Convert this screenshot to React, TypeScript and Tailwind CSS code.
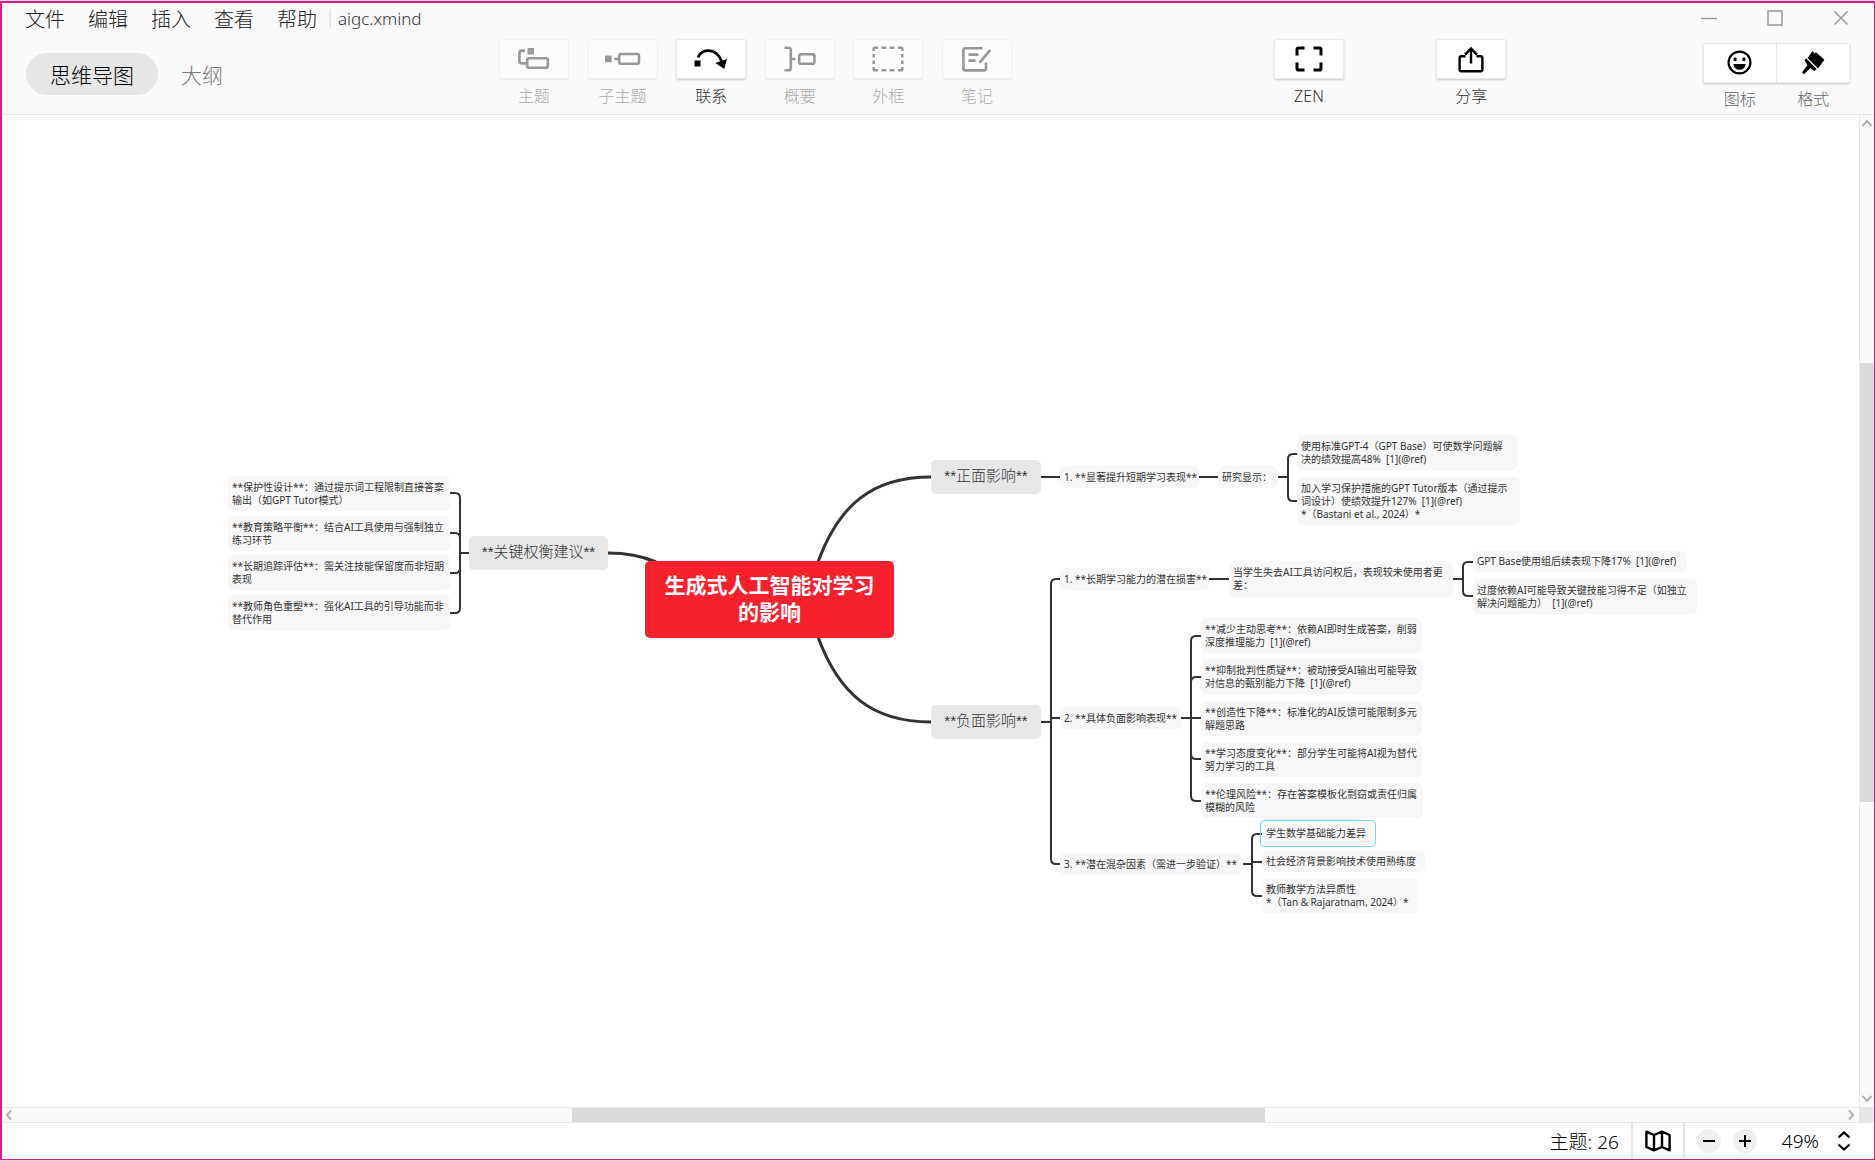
import type { ReactNode } from "react";

const menus = ["文件", "编辑", "插入", "查看", "帮助"];

const TopicIcon = () => (
  <svg width="32" height="22" viewBox="0 0 32 22" fill="none" stroke="currentColor" strokeWidth="2.6">
    <rect x="9.5" y="0" width="6.5" height="6.5" fill="currentColor" stroke="none" />
    <rect x="9.2" y="10.2" width="20.6" height="9.6" rx="1.8" />
    <path d="M7 2.6H4Q1.4 2.6 1.4 5.2V12.8Q1.4 15.4 4 15.4H9" />
  </svg>
);

const SubtopicIcon = () => (
  <svg width="36" height="14" viewBox="0 0 36 14" fill="none" stroke="currentColor" strokeWidth="2.6">
    <rect x="0" y="3.6" width="6.6" height="6.6" fill="currentColor" stroke="none" />
    <path d="M9.5 6.9H14" />
    <rect x="14.2" y="2" width="19.8" height="9.8" rx="1.8" />
  </svg>
);

const RelationIcon = () => (
  <svg width="34" height="22" viewBox="0 0 34 22" fill="none" stroke="currentColor" strokeWidth="2.6">
    <rect x="0.5" y="12.5" width="6" height="6" fill="currentColor" stroke="none" />
    <path d="M4 9.6C6 4.6 10 2.4 14.5 2.6C21.5 2.8 25.6 7.6 27.6 13.5" />
    <path d="M21.4 15L33 11L30.2 21Z" fill="currentColor" stroke="none" />
  </svg>
);

const SummaryIcon = () => (
  <svg width="32" height="26" viewBox="0 0 32 26" fill="none" stroke="currentColor" strokeWidth="2.6">
    <path d="M0.5 1.7H4.2Q6.8 1.7 6.8 4.3V21.7Q6.8 24.3 4.2 24.3H0.5M6.8 13H11.5" />
    <rect x="15.2" y="8.2" width="15.2" height="9.6" rx="1.8" />
  </svg>
);

const BoundaryIcon = () => (
  <svg width="32" height="26" viewBox="0 0 32 26" fill="none" stroke="currentColor" strokeWidth="2.6">
    <path d="M1.7 5V3Q1.7 1.7 3 1.7H6M26 1.7H29Q30.3 1.7 30.3 3V5M30.3 21V23Q30.3 24.3 29 24.3H26M6 24.3H3Q1.7 24.3 1.7 23V21" />
    <path d="M9.5 1.7H14.2M17.6 1.7H22.3M9.5 24.3H14.2M17.6 24.3H22.3M1.7 8V11.5M1.7 14.5V18M30.3 8V11.5M30.3 14.5V18" />
  </svg>
);

const NoteIcon = () => (
  <svg width="30" height="27" viewBox="0 0 30 27" fill="none" stroke="currentColor" strokeWidth="2.6">
    <path d="M20.5 2.2H3.4Q1.4 2.2 1.4 4.2V22.4Q1.4 24.4 3.4 24.4H22Q24 24.4 24 22.4V16.5" />
    <path d="M6.5 8.6H16.5M6.5 14.6H13.5M28.2 4L17.6 16.6" />
  </svg>
);

const ZenIcon = () => (
  <svg width="28" height="26" viewBox="0 0 28 26" fill="none" stroke="currentColor" strokeWidth="3">
    <path d="M2 9.5V3.6Q2 2 3.6 2H9.5M18.5 2H24.4Q26 2 26 3.6V9.5M26 16.5V22.4Q26 24 24.4 24H18.5M9.5 24H3.6Q2 24 2 22.4V16.5" />
  </svg>
);

const ShareIcon = () => (
  <svg width="26" height="27" viewBox="0 0 26 27" fill="none" stroke="currentColor" strokeWidth="2.4">
    <path d="M7.5 10.2H3.3Q1.6 10.2 1.6 11.9V23.4Q1.6 25.2 3.3 25.2H22.7Q24.4 25.2 24.4 23.4V11.9Q24.4 10.2 22.7 10.2H18.5" />
    <path d="M13 17.5V3M7 8.6L13 2.4L19 8.6" />
  </svg>
);

const SmileIcon = () => (
  <svg width="25" height="25" viewBox="0 0 25 25">
    <circle cx="12.5" cy="12.5" r="10.9" fill="none" stroke="currentColor" strokeWidth="2.2" />
    <rect x="6.6" y="7.6" width="3" height="3.4" rx="1" fill="currentColor" />
    <rect x="15.4" y="7.6" width="3" height="3.4" rx="1" fill="currentColor" />
    <path d="M6.2 14H18.8Q17.6 19.8 12.5 19.8Q7.4 19.8 6.2 14Z" fill="currentColor" />
  </svg>
);

const BrushIcon = () => (
  <svg width="24" height="25" viewBox="0 0 24 25" fill="currentColor">
    <path d="M11.5 1L13.4 3.6L15 2.2L23.4 9.8L17 18.6L6.6 8Z" />
    <path d="M3.4 10L5.4 8.6L15.8 19.2L13.2 21L9.4 18L3.6 23.8Q1.6 24.4 1.2 22L6.4 15.2Z" />
  </svg>
);

type ToolProps = { label: string; icon: ReactNode; disabled?: boolean };

function Tool({ label, icon, disabled }: ToolProps) {
  return (
    <button
      disabled={disabled}
      className="flex w-[70px] shrink-0 flex-col items-center gap-[5px] text-black disabled:text-[#989898]"
    >
      <span
        className={
          disabled
            ? "flex h-10 w-full items-center justify-center rounded-xs border border-[#f2f2f2] bg-[#fcfcfc] shadow-[0_1px_1px_#ececec]"
            : "flex h-10 w-full items-center justify-center rounded-xs border border-[#ebebeb] bg-white shadow-[0_1px_2px_#c8c8c8]"
        }
      >
        {icon}
      </span>
      <span className={disabled ? "text-base leading-6 text-[#aaa]" : "text-base leading-6 text-[#333]"}>{label}</span>
    </button>
  );
}

type Topic = { x: number; y: number; w: number; h: number; lines: string[] };

const branches: Topic[] = [
  { x: 467, y: 421, w: 139, h: 34, lines: ["**关键权衡建议**"] },
  { x: 929, y: 345, w: 110, h: 34, lines: ["**正面影响**"] },
  { x: 929, y: 590, w: 110, h: 34, lines: ["**负面影响**"] },
];

const topics: Topic[] = [
  { x: 226, y: 361, w: 222, h: 35, lines: ["**保护性设计**：通过提示词工程限制直接答案", "输出（如GPT Tutor模式）"] },
  { x: 226, y: 401, w: 222, h: 35, lines: ["**教育策略平衡**：结合AI工具使用与强制独立", "练习环节"] },
  { x: 226, y: 440, w: 222, h: 35, lines: ["**长期追踪评估**：需关注技能保留度而非短期", "表现"] },
  { x: 226, y: 480, w: 222, h: 35, lines: ["**教师角色重塑**：强化AI工具的引导功能而非", "替代作用"] },

  { x: 1058, y: 351, w: 139, h: 22, lines: ["1. **显著提升短期学习表现**"] },
  { x: 1216, y: 351, w: 60, h: 22, lines: ["研究显示："] },
  { x: 1295, y: 320, w: 221, h: 35, lines: ["使用标准GPT-4（GPT Base）可使数学问题解", "决的绩效提高48%  [1](@ref)"] },
  { x: 1295, y: 362, w: 223, h: 48, lines: ["加入学习保护措施的GPT Tutor版本（通过提示", "词设计）使绩效提升127%  [1](@ref)", "*（Bastani et al., 2024）*"] },

  { x: 1058, y: 453, w: 149, h: 22, lines: ["1. **长期学习能力的潜在损害**"] },
  { x: 1227, y: 446, w: 224, h: 36, lines: ["当学生失去AI工具访问权后，表现较未使用者更", "差："] },
  { x: 1471, y: 436, w: 214, h: 21, lines: ["GPT Base使用组后续表现下降17%  [1](@ref)"] },
  { x: 1471, y: 464, w: 224, h: 35, lines: ["过度依赖AI可能导致关键技能习得不足（如独立", "解决问题能力）  [1](@ref)"] },

  { x: 1058, y: 592, w: 121, h: 22, lines: ["2. **具体负面影响表现**"] },
  { x: 1199, y: 503, w: 221, h: 35, lines: ["**减少主动思考**：依赖AI即时生成答案，削弱", "深度推理能力  [1](@ref)"] },
  { x: 1199, y: 544, w: 221, h: 35, lines: ["**抑制批判性质疑**：被动接受AI输出可能导致", "对信息的甄别能力下降  [1](@ref)"] },
  { x: 1199, y: 586, w: 221, h: 35, lines: ["**创造性下降**：标准化的AI反馈可能限制多元", "解题思路"] },
  { x: 1199, y: 627, w: 221, h: 35, lines: ["**学习态度变化**：部分学生可能将AI视为替代", "努力学习的工具"] },
  { x: 1199, y: 668, w: 222, h: 35, lines: ["**伦理风险**：存在答案模板化剽窃或责任归属", "模糊的风险"] },

  { x: 1058, y: 738, w: 183, h: 22, lines: ["3. **潜在混杂因素（需进一步验证）**"] },
  { x: 1260, y: 708, w: 111, h: 21, lines: ["学生数学基础能力差异"] },
  { x: 1260, y: 736, w: 163, h: 21, lines: ["社会经济背景影响技术使用熟练度"] },
  { x: 1260, y: 763, w: 156, h: 35, lines: ["教师教学方法异质性", "*（Tan & Rajaratnam, 2024）*"] },
];

function MindMap() {
  return (
    <div className="absolute inset-0 font-['Noto_Sans','Noto_Sans_CJK_SC',sans-serif] font-normal text-[#333]">
      <svg className="absolute left-0 top-0 h-full w-full" fill="none" stroke="#333" strokeWidth="2">
        <g strokeWidth="3">
          <path d="M816 447C837 390 870 362 929 362" />
          <path d="M816 522C837 579 870 607 929 607" />
          <path d="M606 438C626 438 640 441 654 447" />
        </g>
        <path d="M467 438H458M448 378H453Q458 378 458 383V493Q458 498 453 498H448M448 418H453Q458 418 458 423M448 458H453Q458 458 458 453" />
        <path d="M1039 362H1058M1197 362H1216M1276 362H1286M1296 339H1291Q1286 339 1286 344V381Q1286 386 1291 386H1296" />
        <path d="M1039 607H1049M1058 464H1054Q1049 464 1049 469V744Q1049 749 1054 749H1058M1049 603H1058" />
        <path d="M1207 464H1227M1451 464H1461M1471 447H1466Q1461 447 1461 452V476Q1461 481 1466 481H1471" />
        <path d="M1179 603H1199M1199 521H1194Q1189 521 1189 526V681Q1189 686 1194 686H1199M1199 562H1194Q1189 562 1189 567M1199 644H1194Q1189 644 1189 639" />
        <path d="M1241 749H1250M1260 719H1255Q1250 719 1250 724V776Q1250 781 1255 781H1260M1250 747H1260" />
      </svg>

      {topics.map((t) => (
        <div
          key={t.lines[0]}
          className="absolute flex flex-col justify-center whitespace-pre rounded-md bg-[#f7f7f7] pl-1 text-[10px] leading-[13px]"
          style={{ left: t.x, top: t.y, width: t.w, height: t.h }}
        >
          {t.lines.map((line) => (
            <span key={line}>{line}</span>
          ))}
        </div>
      ))}
      <div className="absolute left-[1258px] top-[705px] h-[27px] w-[116px] rounded-sm border border-[#7fd3f9]" />

      {branches.map((b) => (
        <div
          key={b.lines[0]}
          className="absolute flex items-center justify-center whitespace-pre rounded-[5px] bg-[#e7e7e7] pb-0.5 font-['Liberation_Sans','Noto_Sans_CJK_SC',sans-serif] text-[15px] leading-5 font-light"
          style={{ left: b.x, top: b.y, width: b.w, height: b.h }}
        >
          {b.lines[0]}
        </div>
      ))}

      <div className="absolute left-[643px] top-[446px] flex h-[77px] w-[249px] flex-col items-center justify-center rounded-[5px] bg-[#f7212e] pb-0.5 text-[21px] leading-[27px] font-bold text-white">
        <span>生成式人工智能对学习</span>
        <span>的影响</span>
      </div>
    </div>
  );
}

export default function App() {
  return (
    <div className="h-screen bg-[#d9d9d9] py-px font-['Noto_Sans','Noto_Sans_CJK_SC',sans-serif] font-light">
      <div className="flex h-full flex-col overflow-hidden border-2 border-r border-b border-[#d81b8c] bg-white">
        <header className="shrink-0 border-b border-[#e6e6e6] bg-[#fafafa]">
          <div className="flex h-8 items-center pr-[25px] pl-[23px]">
            <nav className="flex gap-[23px] pt-0.5 text-xl leading-6 text-[#222]">
              {menus.map((m) => (
                <button key={m}>{m}</button>
              ))}
            </nav>
            <span className="ml-3 h-5 w-0.5 bg-[#e8e8e8]" />
            <span className="ml-[7px] text-[17px] leading-6 font-light text-[#333]">aigc.xmind</span>
            <div className="ml-auto flex items-center gap-[50px] pb-0.5 text-[#999]">
              <button aria-label="最小化">
                <svg width="16" height="16" stroke="currentColor" strokeWidth="1.5"><path d="M0 8.5H16" /></svg>
              </button>
              <button aria-label="最大化">
                <svg width="16" height="16" fill="none" stroke="currentColor" strokeWidth="1.5"><rect x="1" y="1" width="14" height="14" /></svg>
              </button>
              <button aria-label="关闭">
                <svg width="16" height="16" stroke="currentColor" strokeWidth="1.5"><path d="M1.5 1.5L14.5 14.5M14.5 1.5L1.5 14.5" /></svg>
              </button>
            </div>
          </div>

          <div className="flex h-[79px] items-start pt-1 pr-6 pl-6">
            <div className="flex items-center pt-3.5">
              <button className="h-[42px] w-[132px] shrink-0 rounded-full bg-[#e6e6e6] pt-0.5 text-[21px] leading-7 text-black">思维导图</button>
              <button className="ml-[23px] shrink-0 pt-0.5 text-[21px] leading-7 text-[#777]">大纲</button>
            </div>
            <div className="grow-[275] basis-0" />
            <div className="flex w-[513px] justify-between">
              <Tool label="主题" icon={<TopicIcon />} disabled />
              <Tool label="子主题" icon={<SubtopicIcon />} disabled />
              <Tool label="联系" icon={<RelationIcon />} />
              <Tool label="概要" icon={<SummaryIcon />} disabled />
              <Tool label="外框" icon={<BoundaryIcon />} disabled />
              <Tool label="笔记" icon={<NoteIcon />} disabled />
            </div>
            <div className="grow-[261] basis-0" />
            <Tool label="ZEN" icon={<ZenIcon />} />
            <div className="grow-[92] basis-0" />
            <Tool label="分享" icon={<ShareIcon />} />
            <div className="grow-[196] basis-0" />
            <div className="pt-1">
              <div className="grid w-[147px] grid-cols-2 rounded-xs border border-[#ebebeb] bg-white shadow-[0_1px_2px_#c8c8c8]">
                <button aria-labelledby="icons-label" className="flex h-[38px] items-center justify-center border-r border-[#e6e6e6] pb-0.5">
                  <SmileIcon />
                </button>
                <button aria-labelledby="format-label" className="flex h-[38px] items-center justify-center pb-0.5">
                  <BrushIcon />
                </button>
              </div>
              <div className="grid grid-cols-2 pt-1 text-center text-base leading-6 text-[#666]">
                <span id="icons-label">图标</span>
                <span id="format-label">格式</span>
              </div>
            </div>
          </div>
        </header>

        <div className="flex min-h-0 flex-1">
          <main className="relative min-w-0 flex-1 overflow-hidden bg-white">
            <MindMap />
          </main>
          <div className="flex w-[15px] shrink-0 flex-col items-center border-l border-[#e6e6e6] bg-[#fafafa] text-[#b0b0b0]">
            <svg width="14" height="16" fill="none" stroke="currentColor" strokeWidth="2"><path d="M2.5 11L7 6L11.5 11" /></svg>
            <div className="grow-[232] basis-0" />
            <div className="w-full grow-[439] basis-0 bg-[#dadada]" />
            <div className="grow-[289] basis-0" />
            <svg width="14" height="16" fill="none" stroke="currentColor" strokeWidth="2"><path d="M2.5 5L7 10L11.5 5" /></svg>
          </div>
        </div>

        <div className="flex h-4 shrink-0 border-y border-[#e6e6e6] bg-[#fafafa] text-[#b0b0b0]">
          <svg width="16" height="14" fill="none" stroke="currentColor" strokeWidth="2"><path d="M9 2.5L5 7L9 11.5" /></svg>
          <div className="grow-[554] basis-0" />
          <div className="grow-[693] basis-0 bg-[#dadada]" />
          <div className="grow-[578] basis-0" />
          <svg width="16" height="14" fill="none" stroke="currentColor" strokeWidth="2"><path d="M6 2.5L10 7L6 11.5" /></svg>
          <div className="w-[15px] bg-[#e6e6e6]" />
        </div>

        <footer className="flex h-9 shrink-0 items-stretch justify-end bg-white text-[19px] leading-9 text-black">
          <span className="pt-px pr-3">主题: 26</span>
          <button aria-label="导航图" className="flex w-[54px] items-center justify-center border-x-2 border-[#e6e6e6]">
            <svg width="26" height="22" viewBox="0 0 26 22" fill="none" stroke="currentColor" strokeWidth="2.4" strokeLinejoin="round">
              <path d="M1.4 1.6L9 5L17 1.6L24.6 5V20.4L17 17L9 20.4L1.4 17ZM9 5V20.4M17 1.6V17" />
            </svg>
          </button>
          <div className="flex items-center gap-3 pl-3">
            <button aria-label="缩小" className="flex h-6 w-6 items-center justify-center rounded-full bg-[#f0f0f0]">
              <svg width="12" height="12" stroke="currentColor" strokeWidth="2"><path d="M0 6H12" /></svg>
            </button>
            <button aria-label="放大" className="flex h-6 w-6 items-center justify-center rounded-full bg-[#f0f0f0]">
              <svg width="12" height="12" stroke="currentColor" strokeWidth="2"><path d="M0 6H12M6 0V12" /></svg>
            </button>
          </div>
          <button className="flex items-center gap-[18px] pr-[23px] pl-[25px]">
            49%
            <svg width="14" height="20" fill="none" stroke="currentColor" strokeWidth="2.2"><path d="M1.5 6.5L7 1.5L12.5 6.5M1.5 13.5L7 18.5L12.5 13.5" /></svg>
          </button>
        </footer>
      </div>
    </div>
  );
}
